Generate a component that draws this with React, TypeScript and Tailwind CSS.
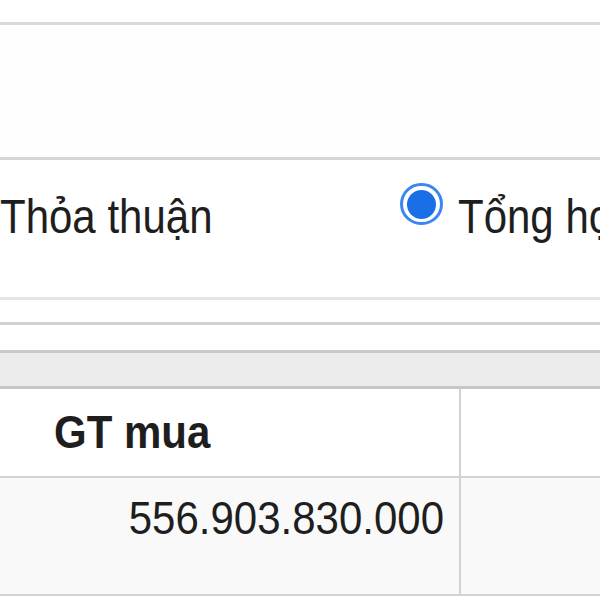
import React from 'react'

const App = () => {
  return (
    <div className="w-[600px] h-[600px] overflow-hidden bg-white text-[#1e1e1e] font-['Liberation_Sans',Arial,sans-serif]">
      {/* Top spacing */}
      <div className="h-[25px] border-b-[3px] border-[#d9d9d9]"></div>

      {/* Empty panel */}
      <div className="h-[135px] bg-[#fefefe] border-b-[3px] border-[#d6d6d6]"></div>

      {/* Radio options */}
      <div className="h-[140px] border-b-[3px] border-[#e4e4e4] flex items-start pt-[23px] whitespace-nowrap">
        <span className="w-[400px] shrink-0 mt-[10px] text-[42px] leading-[48px] scale-y-[1.14]">Thỏa thuận</span>
        <span className="w-[43px] h-[42px] shrink-0 rounded-full border-[3px] border-[#3b86f2] bg-white flex items-center justify-center">
          <span className="w-[29px] h-[29px] rounded-full bg-[#1a6fe6]"></span>
        </span>
        <span className="ml-[15px] mt-[10px] text-[42px] leading-[48px] scale-y-[1.14]">Tổng hợp</span>
      </div>

      <div className="h-[25px] border-b-[3px] border-[#d0d0d0]"></div>
      <div className="h-[28px] border-b-[3px] border-[#c9c9c9]"></div>

      {/* Table */}
      <div className="h-[36px] bg-[#ececec] border-b-[3px] border-[#c6c6c6]"></div>

      <div className="h-[89px] flex border-b-2 border-[#d4d4d4]">
        <div className="w-[461px] shrink-0 border-r-2 border-[#d2d2d2] flex items-center pl-[54px]">
          <span className="text-[42px] leading-[48px] font-bold scale-y-[1.1]">GT mua</span>
        </div>
        <div className="flex-1"></div>
      </div>

      <div className="h-[118px] flex bg-[#f9f9f9] border-b-2 border-[#d4d4d4]">
        <div className="w-[461px] shrink-0 border-r-2 border-[#d2d2d2] flex justify-end items-start pt-[17px] pr-[15px]">
          <span className="text-[42px] leading-[48px] scale-y-[1.1]">556.903.830.000</span>
        </div>
        <div className="flex-1"></div>
      </div>
    </div>
  )
}

export default App
